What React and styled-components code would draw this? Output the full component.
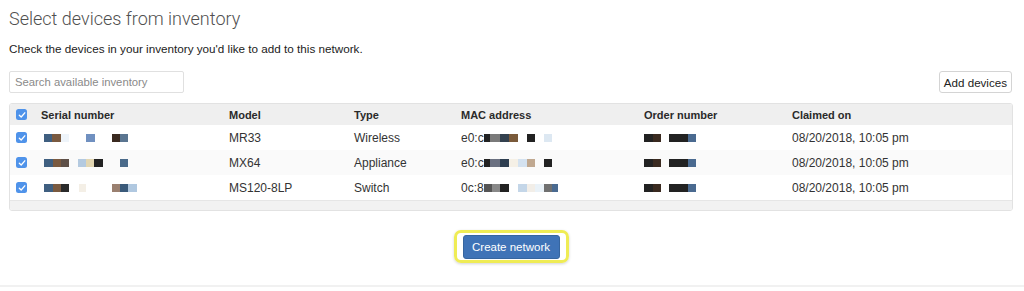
import React from "react";
import styled, { createGlobalStyle } from "styled-components";

const Global = createGlobalStyle`
  html, body { margin: 0; padding: 0; background: #fff; }
  body { font-family: "Liberation Sans", Arial, sans-serif; color: #333; }
`;

const Page = styled.div`
  width: 1024px;
  height: 291px;
  box-sizing: border-box;
  padding: 8px 11px 0 9px;
  display: flex;
  flex-direction: column;
  position: relative;
`;

const Title = styled.h1`
  margin: 0;
  font-family: Roboto, "Liberation Sans", sans-serif;
  font-weight: 300;
  font-size: 18px;
  line-height: 22px;
  color: #505050;
`;

const Subtitle = styled.p`
  margin: 11px 0 0;
  font-size: 11.7px;
  line-height: 16px;
  color: #222;
`;

const Toolbar = styled.div`
  margin-top: 14px;
  display: flex;
  justify-content: space-between;
  align-items: center;
  height: 22px;
`;

const Search = styled.input`
  box-sizing: border-box;
  width: 175px;
  height: 22px;
  border: 1px solid #e0e0e0;
  border-radius: 2px;
  padding: 0 5px;
  font-family: "Liberation Sans", Arial, sans-serif;
  font-size: 11.3px;
  color: #333;
  outline: none;
  &::placeholder { color: #8a8a8a; }
`;

const SmallButton = styled.button`
  box-sizing: border-box;
  height: 22px;
  padding: 0 4px;
  background: #fff;
  border: 1px solid #d4d4d4;
  border-radius: 3px;
  font-family: "Liberation Sans", Arial, sans-serif;
  font-size: 11.6px;
  color: #222;
  margin-right: 1px;
`;

const Table = styled.div`
  margin-top: 10px;
  border: 1px solid #e2e2e2;
  border-radius: 3px;
  overflow: hidden;
`;

const cols = "31px 188px 125px 106px 184px 148px 1fr";

const HeadRow = styled.div`
  display: grid;
  grid-template-columns: ${cols};
  height: 21px;
  align-items: center;
  background: #efefef;
  font-size: 11px;
  font-weight: bold;
  color: #2a2a2a;
`;

const Row = styled.div`
  display: grid;
  grid-template-columns: ${cols};
  height: 25px;
  align-items: center;
  background: ${(p) => (p.$striped ? "#fafafa" : "#fff")};
  font-size: 12px;
  color: #333;
`;

const Foot = styled.div`
  height: 9px;
  background: #f2f2f2;
  border-top: 1px solid #e6e6e6;
`;

const Cell = styled.div`
  display: flex;
  align-items: center;
  white-space: nowrap;
  padding-left: ${(p) => p.$pl || 0}px;
`;

const Box = styled.span`
  width: 11px;
  height: 11px;
  border-radius: 2.5px;
  background: #4f93ea;
  display: inline-flex;
  align-items: center;
  justify-content: center;
`;

const Mosaic = styled.span`
  display: inline-flex;
  height: 8px;
  margin-left: ${(p) => p.$ml || 0}px;
`;

const Tile = styled.span`
  display: block;
  height: 8px;
  flex: none;
`;

const Footer = styled.div`
  margin-top: 19px;
  display: flex;
  justify-content: center;
`;

const Highlight = styled.span`
  display: inline-flex;
  padding: 1.5px 6px;
  border: 3px solid #efec55;
  border-radius: 7px;
  box-shadow: 0 1px 3px rgba(0, 0, 0, 0.18);
`;

const PrimaryButton = styled.button`
  width: 97px;
  height: 24px;
  background: #3f73b7;
  border: 1px solid #36659f;
  border-radius: 3px;
  color: #fff;
  font-family: "Liberation Sans", Arial, sans-serif;
  font-size: 11.5px;
  padding: 0;
`;

const BottomLine = styled.div`
  position: absolute;
  left: 0;
  right: 0;
  top: 285px;
  height: 2px;
  background: #f1f1f1;
`;

const Check = () => (
  <Box>
    <svg width="8" height="8" viewBox="0 0 8 8">
      <path d="M1.3 4.2 L3.2 6 L6.8 1.8" fill="none" stroke="#fff" strokeWidth="1.3" strokeLinecap="round" strokeLinejoin="round" />
    </svg>
  </Box>
);

const Pix = ({ tiles, ml }) => (
  <Mosaic $ml={ml}>
    {tiles.map(([w, c], i) => (
      <Tile key={i} style={{ width: w, background: c || "transparent" }} />
    ))}
  </Mosaic>
);

const order = [[9, "#222"], [8, "#3a2a20"], [8], [19, "#222"], [8, "#4a6a90"]];

const rows = [
  {
    serial: [[8, "#3f5f80"], [9, "#7a5a40"], [8, "#eef4fa"], [17], [9, "#7090c0"], [17], [8, "#3a2a20"], [8, "#5a7590"]],
    model: "MR33",
    type: "Wireless",
    macText: "e0:c",
    mac: [[6, "#222"], [10, "#7a7a7a"], [9, "#33404e"], [9, "#7a5a3a"], [9], [8, "#222"], [9], [8, "#dde8f2"]],
  },
  {
    serial: [[9, "#3f5f80"], [8, "#7a5a40"], [8, "#5e5048"], [9], [8, "#b4cae0"], [8, "#e2d6b2"], [9, "#222"], [17], [8, "#4a6a8a"]],
    model: "MX64",
    type: "Appliance",
    macText: "e0:c",
    mac: [[6, "#222"], [10, "#6a7080"], [9, "#2e3e50"], [9, "#f5f0e6"], [9, "#d4e2f0"], [8, "#c0a890"], [9], [8, "#222"]],
  },
  {
    serial: [[9, "#3f5f80"], [8, "#7a5a40"], [8, "#2a2a2a"], [10], [7, "#f4efe6"], [26], [8, "#9a8070"], [8, "#3a5a7a"], [9, "#b0c8e0"]],
    model: "MS120-8LP",
    type: "Switch",
    macText: "0c:8",
    mac: [[8, "#555"], [8, "#888"], [9, "#222"], [9], [9, "#c4d6e8"], [8, "#f2eee8"], [9, "#eaf2f8"], [8, "#707070"], [6, "#4a6a90"]],
  },
];

export default function App() {
  return (
    <>
      <Global />
      <Page>
        <Title>Select devices from inventory</Title>
        <Subtitle>Check the devices in your inventory you'd like to add to this network.</Subtitle>
        <Toolbar>
          <Search placeholder="Search available inventory" />
          <SmallButton>Add devices</SmallButton>
        </Toolbar>
        <Table>
          <HeadRow>
            <Cell $pl={6}><Check /></Cell>
            <Cell>Serial number</Cell>
            <Cell>Model</Cell>
            <Cell>Type</Cell>
            <Cell $pl={1}>MAC address</Cell>
            <Cell>Order number</Cell>
            <Cell>Claimed on</Cell>
          </HeadRow>
          {rows.map((r, i) => (
            <Row key={i} $striped={i === 1}>
              <Cell $pl={6}><Check /></Cell>
              <Cell><Pix tiles={r.serial} ml={3} /></Cell>
              <Cell>{r.model}</Cell>
              <Cell>{r.type}</Cell>
              <Cell $pl={1}>{r.macText}<Pix tiles={r.mac} /></Cell>
              <Cell><Pix tiles={order} /></Cell>
              <Cell>08/20/2018, 10:05 pm</Cell>
            </Row>
          ))}
          <Foot />
        </Table>
        <Footer>
          <Highlight>
            <PrimaryButton>Create network</PrimaryButton>
          </Highlight>
        </Footer>
        <BottomLine />
      </Page>
    </>
  );
}
